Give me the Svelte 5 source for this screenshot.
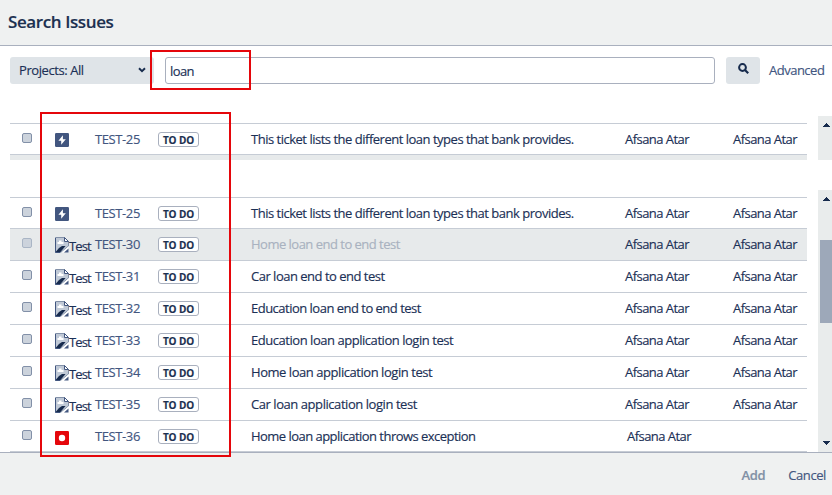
<script>
  const columns = { first: 'Afsana Atar', second: 'Afsana Atar' };
  const story = {
    kind: 'story',
    key: 'TEST-25',
    summary: 'This ticket lists the different loan types that bank provides.',
    spacing: -0.49,
    ...columns
  };
  const test = (key, summary, spacing, disabled = false) => ({
    kind: 'test', key, summary, spacing, disabled, ...columns
  });
  const pinned = [story];
  const results = [
    story,
    test('TEST-30', 'Home loan end to end test', -0.51, true),
    test('TEST-31', 'Car loan end to end test', -0.5),
    test('TEST-32', 'Education loan end to end test', -0.51),
    test('TEST-33', 'Education loan application login test', -0.46),
    test('TEST-34', 'Home loan application login test', -0.45),
    test('TEST-35', 'Car loan application login test', -0.44),
    { kind: 'bug', key: 'TEST-36', summary: 'Home loan application throws exception', spacing: -0.53, first: 'Afsana Atar', second: '' }
  ];
</script>

{#snippet arrow(down)}
  <svg class="arrow" width="7" height="4" viewBox="0 0 7 4" shape-rendering="crispEdges">
    <path d={down ? 'M0 0H7L3.5 4Z' : 'M0 4H7L3.5 0Z'} fill="#172b4d" />
  </svg>
{/snippet}

{#snippet row(issue)}
  <div class="row" class:disabled={issue.disabled}>
    <span class="check"></span>
    <span class="type" class:bug={issue.kind === 'bug'}>
      {#if issue.kind === 'story'}
        <svg width="14" height="14" viewBox="0 0 14 14">
          <rect width="14" height="14" rx="1.2" fill="#42567f" />
          <path d="M7.9 2.2L3.4 7.8H6.2V11.8L10.8 6.2H7.9Z" fill="#fff" />
        </svg>
      {:else if issue.kind === 'bug'}
        <svg width="14" height="14" viewBox="0 0 14 14">
          <rect width="14" height="14" rx="1.2" fill="#e5060b" />
          <circle cx="7" cy="7" r="3.2" fill="#fff" />
        </svg>
      {:else}
        <svg class="broken" width="14" height="16" viewBox="0 0 14 16">
          <path d="M.5 .5H9.5L13.5 4.5V9L5.5 15.5H.5Z" fill="#c0c9d6" stroke="#8290a8" />
          <path d="M9.5 .5V4.5H13.5Z" fill="#fff" stroke="#42567f" />
          <path d="M2.5 7V5H4V3.5H6.5V5H8.5V7Z" fill="#fff" />
          <path d="M1 14.5L4 11L7 9H10.5L5.5 15H1Z" fill="#172b4d" />
          <path d="M6.5 15.5L13.5 9.5V15.5Z" fill="#fff" />
          <path d="M9 15.5H13.5V11.5Z" fill="#42567f" />
          <path d="M.5 1V15.5H5" fill="none" stroke="#42567f" />
        </svg><span class="alt">Test</span>
      {/if}
    </span>
    <span class="key">{issue.key}</span>
    <span class="status"><b>TO DO</b></span>
    <span class="summary" style="letter-spacing: {issue.spacing}px">{issue.summary}</span>
    <span class="user" class:shifted={!issue.second}>{issue.first}</span>
    <span class="user last">{issue.second}</span>
  </div>
{/snippet}

<div class="dialog">
  <header><h1>Search Issues</h1></header>
  <div class="toolbar">
    <div class="select">
      <span>Projects: All</span>
      <svg width="8" height="6" viewBox="0 0 8 6"><path d="M1 1.2L4 4.1L7 1.2" fill="none" stroke="#172b4d" stroke-width="1.9" /></svg>
    </div>
    <div class="input"><span>loan</span></div>
    <div class="search">
      <svg width="11" height="11" viewBox="0 0 11 11"><circle cx="4.5" cy="4.5" r="3.4" fill="none" stroke="#172b4d" stroke-width="2" /><path d="M7 7L10.2 10.2" stroke="#172b4d" stroke-width="2.2" /></svg>
    </div>
    <span class="advanced">Advanced</span>
  </div>
  <div class="pane pinned">
    <div class="list">
      {#each pinned as issue}{@render row(issue)}{/each}
      <div class="sliver"></div>
    </div>
    <div class="scroll">{@render arrow(false)}</div>
  </div>
  <div class="pane results">
    <div class="list">
      {#each results as issue}{@render row(issue)}{/each}
    </div>
    <div class="scroll">
      {@render arrow(false)}
      <div class="thumb"></div>
      {@render arrow(true)}
    </div>
  </div>
  <footer><span class="add">Add</span><span class="cancel">Cancel</span></footer>
  <div class="mark query"></div>
  <div class="mark issues"></div>
</div>

<style>
  :global(body) { margin: 0; background: #fff; }
  * { box-sizing: border-box; }
  .dialog {
    position: relative;
    width: 832px;
    height: 495px;
    display: flex;
    flex-direction: column;
    overflow: hidden;
    background: #fff;
    color: #1b3056;
    font: 13px/18px "Open Sans", "Noto Sans", sans-serif;
    letter-spacing: -0.27px;
    white-space: nowrap;
    -webkit-text-stroke: 0.15px currentColor;
  }
  header {
    flex: none;
    height: 46px;
    border-bottom: 1px solid #a9b0be;
    background: #eff1f1;
    padding: 10px 8px 0;
  }
  h1 { margin: 0; font-size: 17px; line-height: 24px; font-weight: 600; letter-spacing: -0.4px; color: #1b3050; }
  .toolbar { flex: none; height: 70px; padding-top: 11px; display: flex; align-items: flex-start; }
  .select {
    width: 144px; height: 27px; margin-left: 10px; padding: 0 8px 1px 9px;
    display: flex; align-items: center; justify-content: space-between;
    border-radius: 3px; background: #dfe4e8; letter-spacing: -0.42px;
  }
  .input {
    width: 550px; height: 27px; margin-left: 11px; padding: 4px 4px;
    border: 1px solid #a9b0be; border-radius: 3px; background: #fff; letter-spacing: -0.6px;
  }
  .search {
    width: 34px; height: 27px; margin-left: 11px; padding: 6px 0 0 12px;
    border-radius: 3px; background: #dfe4e8;
  }
  .search svg, .select svg, .type svg, .arrow { display: block; flex: none; }
  .advanced { margin: 4px 0 0 9px; color: #42567f; letter-spacing: -0.5px; }
  .pane { flex: none; display: flex; justify-content: space-between; }
  .pinned { height: 44px; margin-bottom: 30px; }
  .results { height: 262px; }
  .list { width: 797px; margin-left: 10px; padding-top: 7px; }
  .row {
    height: 32px;
    padding-bottom: 1px;
    display: flex;
    align-items: center;
    border-top: 1px solid #c6ccd5;
  }
  .row:first-child { height: 31px; padding-bottom: 0; }
  .results .row:last-child { padding-bottom: 0; border-bottom: 1px solid #c6ccd5; }
  .sliver { height: 6px; border-top: 1px solid #c6ccd5; background: #e7eaeb; }
  .row.disabled { background: #e7eaeb; }
  .check {
    width: 10px; height: 10px; margin: -3px 0 0 12px;
    border: 1px solid #8290a8; border-radius: 2px; background: #ccd3dc;
  }
  .disabled .check { border-color: #a9b5c5; }
  .type { width: 40px; margin-left: 23px; display: flex; align-items: center; position: relative; top: 1px; }
  .type.bug { margin-top: 2px; }
  .broken { margin-top: -1px; }
  .alt { margin-top: 2px; letter-spacing: -0.9px; }
  .key { width: 63px; color: #42567f; letter-spacing: -0.4px; }
  .status {
    width: 41px; height: 15px;
    border: 1px solid #a9b0be; border-radius: 3px; background: #fff;
    font-size: 10px; line-height: 14px; letter-spacing: -0.1px; text-align: center; color: #1b3050;
  }
  .status b { font-weight: 700; }
  .summary { width: 374px; margin-left: 52px; }
  .disabled .summary { color: #a9b2c0; }
  .user { width: 108px; letter-spacing: -0.54px; }
  .user.shifted { position: relative; left: 2px; }
  .user.last { width: 70px; }
  .scroll {
    width: 14px; background: #e9ecec;
    display: flex; flex-direction: column; align-items: center;
    padding: 7px 0 7px;
  }
  .scroll .arrow { margin-left: 3px; }
  .thumb { width: 12px; height: 83px; margin: 39px 0 auto 2px; background: #9da8b9; }
  footer {
    flex: none; height: 43px; border-top: 1px solid #a9b0be; background: #eff1f1;
    display: flex; justify-content: flex-end; padding: 13px 6px 0 0; gap: 23px; letter-spacing: -0.4px;
  }
  .add { color: #8190a5; font-weight: 600; }
  .cancel { color: #42567f; }
  .mark { position: absolute; border: 2px solid #e5060b; }
  .query { left: 150px; top: 50px; width: 101px; height: 40px; }
  .issues { left: 40px; top: 112px; width: 191px; height: 345px; }
</style>
